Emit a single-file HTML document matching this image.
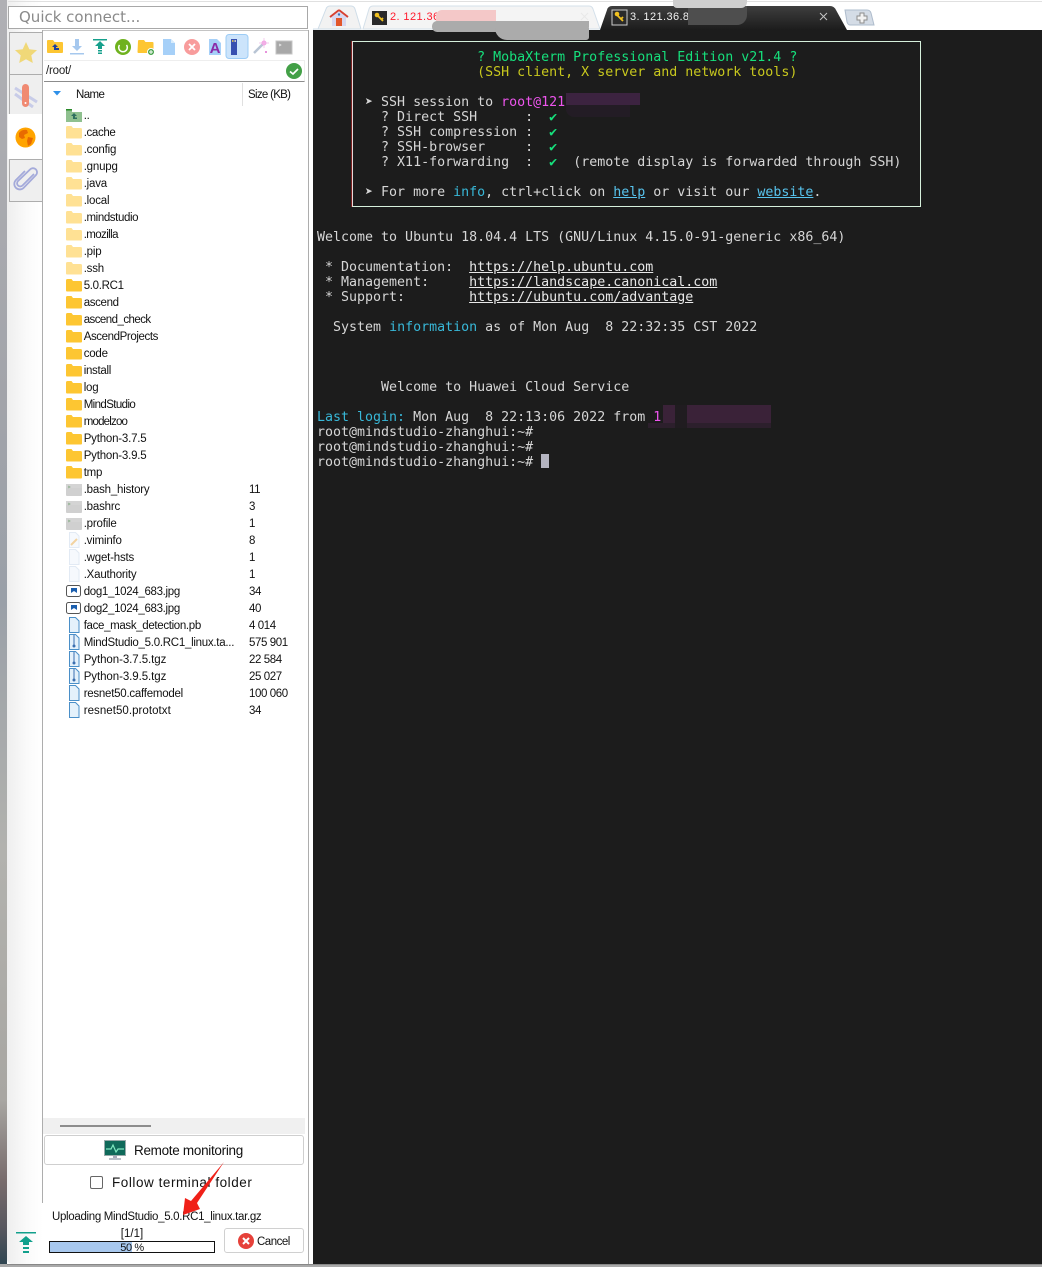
<!DOCTYPE html>
<html><head><meta charset="utf-8"><title>MobaXterm</title>
<style>
html,body{margin:0;padding:0;width:1042px;height:1267px;overflow:hidden;background:#fff}
.a{position:absolute}
#left{position:absolute;left:0;top:0;width:7px;height:1267px;background:linear-gradient(#b0b0b4 0,#a2a4aa 400px,#9aa0a8 600px,#b2b2ae 850px,#a8a6a2 1100px,#786c6c 1180px,#56565e 1230px,#2c4450 1267px)}
#win{position:absolute;left:7px;top:0;width:1035px;height:1264px;background:linear-gradient(90deg,#eeeeee 0,#fafafa 20px,#fff 36px);border-bottom-left-radius:5px}
.stab{position:absolute;left:9px;width:32px;background:#efefef;border:1px solid #adadad;box-sizing:content-box}
.r{position:absolute;left:44px;width:262px;height:16px;margin-top:1px;font:11.5px/16px "Liberation Sans",sans-serif;color:#111;letter-spacing:-.2px;white-space:nowrap}
.r svg{position:absolute;left:22px;top:-1px}
.r b{font-weight:normal;position:absolute;left:39.700px;top:0}
.r i{font-style:normal;position:absolute;left:205px;top:0;letter-spacing:-.4px}
#term{position:absolute;left:313px;top:30px;width:729px;height:1234px;background:#1c1c1c}
pre{position:absolute;left:317px;margin:0;font:13.3px/15px "DejaVu Sans Mono","Liberation Mono",monospace;color:#d6d6d6;white-space:pre}
.g{color:#16e07c}.y{color:#c8c81e}.m{color:#ee55ee}.c{color:#38b8d8}.l{color:#58c4ee;text-decoration:underline}.k{color:#16e07c}
.u{color:#e8e8e8;text-decoration:underline}
</style></head><body>
<svg width="0" height="0" style="position:absolute"><defs>
<symbol id="fp" viewBox="0 0 16 16"><path d="M0 3.500q0-1.500 1.500-1.500h4l1.500 2h7.500q1.500 0 1.500 1.500v8q0 1-1 1h-14q-1 0-1-1z" fill="#ffe194"/></symbol>
<symbol id="fs" viewBox="0 0 16 16"><path d="M0 3.500q0-1.500 1.500-1.500h4l1.500 2h7.500q1.500 0 1.500 1.500v8q0 1-1 1h-14q-1 0-1-1z" fill="#fdc632"/></symbol>
<symbol id="ft" viewBox="0 0 16 16"><path d="M0 6h16v8q0 1-1 1H1q-1 0-1-1z" fill="#d0d0d0"/><rect y="3" width="16" height="4" fill="#d4d4d4"/><path d="M2 5l2 1-2 1" fill="none" stroke="#8fb08f" stroke-width=".8"/></symbol>
<symbol id="fd" viewBox="0 0 16 16"><path d="M3.500.500h6l3.500 3.500v11.500h-9.500z" fill="#f6f9fd" stroke="#e2eaf4"/></symbol>
<symbol id="fb" viewBox="0 0 16 16"><path d="M3.500.500h6l3.500 3.500v11.500h-9.500z" fill="#e4f1fb" stroke="#4a8fc8"/></symbol>
<symbol id="fz" viewBox="0 0 16 16"><path d="M3.500.500h6l3.500 3.500v11.500h-9.500z" fill="#e4f1fb" stroke="#4a8fc8"/><path d="M8 1v10" stroke="#3a6fb0"/><circle cx="8" cy="12" r="1.500" fill="#3a6fb0"/></symbol>
<symbol id="fi" viewBox="0 0 16 16"><rect x=".5" y="2.500" width="14" height="11" rx="2" fill="#fff" stroke="#555"/><path d="M5 5h6v5l-3-2-3 2z" fill="#1c5fae"/></symbol>
<symbol id="fv" viewBox="0 0 16 16"><path d="M3.500.500h6l3.500 3.500v11.500h-9.500z" fill="#f6f9fd" stroke="#e2eaf4"/><path d="M5 13l6-6" stroke="#f2d3a0" stroke-width="2"/></symbol>
</defs></svg>

<div id="left"></div>
<div id="win"></div>
<div class="a" style="left:0;top:1264px;width:1042px;height:3px;background:#a9a9a9"></div>
<div class="a" style="left:7px;top:1264px;width:1035px;height:1px;background:#888"></div>

<!-- top -->
<div class="a" style="left:8px;top:1px;width:1034px;height:1px;background:#e0e0e0"></div>
<div class="a" style="left:8px;top:6px;width:298px;height:21px;background:#fff;border:1px solid #a8a8a8;font:15px/20px 'DejaVu Sans',sans-serif;color:#8a8a8a;text-indent:10px">Quick connect...</div>

<!-- side tabs -->
<div class="stab" style="top:32px;height:41px"></div>
<div class="stab" style="top:74px;height:39px"></div>
<div class="a" style="left:8px;top:114px;width:35px;height:45px;background:#fff"></div>
<div class="stab" style="top:159px;height:41px"></div>
<svg class="a" style="left:13px;top:40px" width="26" height="26" viewBox="0 0 26 26"><path d="M13 2l3.300 7.200 7.700.9-5.700 5.300 1.500 7.600-6.800-3.800-6.800 3.800 1.500-7.600L2 10.100l7.700-.9z" fill="#f0d878"/></svg>
<svg class="a" style="left:13px;top:82px" width="26" height="26" viewBox="0 0 26 26"><path d="M2 6l22 14M2 12l18 13" stroke="#c8cce8" stroke-width="3" fill="none"/><rect x="9" y="2" width="7" height="23" rx="3.500" fill="#f08a72"/><circle cx="12.500" cy="21" r="1" fill="#fff"/></svg>
<svg class="a" style="left:15px;top:127px" width="21" height="21" viewBox="0 0 21 21"><circle cx="10.500" cy="10.500" r="10" fill="#ffa400"/><path d="M4 6q3-4 8-3l1 3-4 2 1 3-3 1-3-2zM13 10l5 1-2 6-3 2-1-5z" fill="#e86a00"/></svg>
<svg class="a" style="left:13px;top:166px" width="26" height="26" viewBox="0 0 26 26"><path d="M21 8L9.500 19.500a3 3 0 0 1-4.500-4.500L17 3.500a4 4 0 0 1 6 5.500L10.500 22a5.500 5.500 0 0 1-8-7.500L12 5" fill="none" stroke="#a4aada" stroke-width="1.800"/></svg>

<!-- panel frame -->
<div class="a" style="left:42px;top:30px;width:266px;height:1px;background:#c4c4c4"></div>
<div class="a" style="left:42px;top:30px;width:1px;height:1173px;background:#adadad"></div>
<div class="a" style="left:308px;top:30px;width:1px;height:1234px;background:#adadad"></div>

<!-- toolbar -->
<svg class="a" style="left:0;top:0" width="310" height="62" viewBox="0 0 310 62">
<path d="M47 41q0-1 1-1h5l1.500 2H62q1 0 1 1v9q0 1-1 1H48q-1 0-1-1z" fill="#fdc632"/><path d="M55 44l-3 3h2v3h5v-2h-3v-1h2z" fill="#1f3f9a"/>
<path d="M75 39h4v7h3l-5 5-5-5h3z" fill="#a6c8ee"/><rect x="70" y="53" width="14" height="1.500" fill="#a6c8ee"/>
<rect x="93" y="39" width="14" height="1.500" fill="#16a08c"/><path d="M100 41l5 5h-3v3h-4v-3h-3z" fill="#16a08c"/><path d="M98 50h4v1.500h-4zM98 52.500h4V54h-4z" fill="#16a08c"/>
<circle cx="123" cy="47" r="8" fill="#6fb21f"/><path d="M119.500 45a4.300 4.300 0 1 0 7 0" fill="none" stroke="#fff" stroke-width="1.500"/>
<path d="M138 41q0-1 1-1h5l1.500 2h7q1 0 1 1v9q0 1-1 1h-14q-1 0-1-1z" fill="#fdc632"/><circle cx="151" cy="52" r="3.500" fill="#43a047" stroke="#fff"/><path d="M149 52h4M151 50v4" stroke="#fff"/>
<path d="M163 39h8l4 4v12h-12z" fill="#a6d0f8"/><path d="M171 39l4 4h-4z" fill="#d8ecfc"/>
<circle cx="192" cy="47" r="8" fill="#f89c9c"/><path d="M189 44l6 6m0-6l-6 6" stroke="#fff" stroke-width="1.800"/>
<path d="M209 39h8l4 4v12h-12z" fill="#a6d0f8"/>
<rect x="226" y="34.500" width="22" height="24" rx="3" fill="#cce4fb" stroke="#9cccf6"/><rect x="231" y="39" width="6" height="16" fill="#3850b0"/><rect x="232" y="40" width="1.500" height="2" fill="#c8b060"/><rect x="234.500" y="40" width="1.500" height="2" fill="#c8c8c8"/>
<path d="M254 53l9-9" stroke="#b8c4d4" stroke-width="2.500"/><circle cx="264" cy="43" r="2.500" fill="#f4a4e4"/><path d="M264 38v10M259 43h10" stroke="#f0b8e8" stroke-width=".7"/><circle cx="266" cy="52" r="1" fill="#e070d0"/>
<rect x="276" y="41" width="16" height="13" fill="#a8a8a8" stroke="#c4c4c4"/><path d="M279 44l2 1-2 1" fill="none" stroke="#eee" stroke-width=".7"/>
</svg>
<div class="a" style="left:207px;top:41px;width:16px;font:bold 15px/15px 'Liberation Sans',sans-serif;color:#8a2aa8;text-align:center">A</div>

<!-- path -->
<div class="a" style="left:44px;top:60px;width:260px;height:20px;background:#fff;border-top:1px solid #eee;border-right:1px solid #eee;border-bottom:1px solid #8c8c8c;font:11.500px/20px 'Liberation Sans',sans-serif;color:#222;text-indent:2px;letter-spacing:-.2px">/root/</div>
<svg class="a" style="left:286px;top:63px" width="16" height="16" viewBox="0 0 16 16"><circle cx="8" cy="8" r="8" fill="#43a047"/><path d="M4 8.500l3 2.500 5-5" fill="none" stroke="#fff" stroke-width="1.700"/></svg>

<!-- header -->
<svg class="a" style="left:53px;top:91px" width="8" height="5"><path d="M0 0h8L4 4.500z" fill="#2f90e8"/></svg>
<div class="a" style="left:76px;top:87px;font:11.500px/16px 'Liberation Sans',sans-serif;color:#111;letter-spacing:-.6px">Name</div>
<div class="a" style="left:242px;top:83px;width:1px;height:23px;background:#e0e0e0"></div>
<div class="a" style="left:248px;top:87px;font:11.500px/16px 'Liberation Sans',sans-serif;color:#111;letter-spacing:-.7px">Size (KB)</div>

<!-- file list -->
<div class="r" style="top:107px"><svg width="16" height="16" viewBox="0 0 16 16"><path d="M0 3h6v2h10v10H0z" fill="#8fc08f"/><path d="M0 2h6v1.500H0z" fill="#2a8a2a"/><path d="M8 6l-3 3h2v3h4v-1.500H9V9h2z" fill="#2f6f5f"/></svg><b>..</b></div>
<div class="r" style="top:124px"><svg width="16" height="16"><use href="#fp"/></svg><b style="letter-spacing:-.35px">.cache</b></div>
<div class="r" style="top:141px"><svg width="16" height="16"><use href="#fp"/></svg><b>.config</b></div>
<div class="r" style="top:158px"><svg width="16" height="16"><use href="#fp"/></svg><b>.gnupg</b></div>
<div class="r" style="top:175px"><svg width="16" height="16"><use href="#fp"/></svg><b>.java</b></div>
<div class="r" style="top:192px"><svg width="16" height="16"><use href="#fp"/></svg><b>.local</b></div>
<div class="r" style="top:209px"><svg width="16" height="16"><use href="#fp"/></svg><b style="letter-spacing:-.4px">.mindstudio</b></div>
<div class="r" style="top:226px"><svg width="16" height="16"><use href="#fp"/></svg><b style="letter-spacing:-.6px">.mozilla</b></div>
<div class="r" style="top:243px"><svg width="16" height="16"><use href="#fp"/></svg><b>.pip</b></div>
<div class="r" style="top:260px"><svg width="16" height="16"><use href="#fp"/></svg><b>.ssh</b></div>
<div class="r" style="top:277px"><svg width="16" height="16"><use href="#fs"/></svg><b style="letter-spacing:-.3px">5.0.RC1</b></div>
<div class="r" style="top:294px"><svg width="16" height="16"><use href="#fs"/></svg><b style="letter-spacing:-.35px">ascend</b></div>
<div class="r" style="top:311px"><svg width="16" height="16"><use href="#fs"/></svg><b style="letter-spacing:-.55px">ascend_check</b></div>
<div class="r" style="top:328px"><svg width="16" height="16"><use href="#fs"/></svg><b style="letter-spacing:-.4px">AscendProjects</b></div>
<div class="r" style="top:345px"><svg width="16" height="16"><use href="#fs"/></svg><b>code</b></div>
<div class="r" style="top:362px"><svg width="16" height="16"><use href="#fs"/></svg><b style="letter-spacing:-.3px">install</b></div>
<div class="r" style="top:379px"><svg width="16" height="16"><use href="#fs"/></svg><b>log</b></div>
<div class="r" style="top:396px"><svg width="16" height="16"><use href="#fs"/></svg><b style="letter-spacing:-.6px">MindStudio</b></div>
<div class="r" style="top:413px"><svg width="16" height="16"><use href="#fs"/></svg><b style="letter-spacing:-.8px">modelzoo</b></div>
<div class="r" style="top:430px"><svg width="16" height="16"><use href="#fs"/></svg><b>Python-3.7.5</b></div>
<div class="r" style="top:447px"><svg width="16" height="16"><use href="#fs"/></svg><b>Python-3.9.5</b></div>
<div class="r" style="top:464px"><svg width="16" height="16"><use href="#fs"/></svg><b>tmp</b></div>
<div class="r" style="top:481px"><svg width="16" height="16"><use href="#ft"/></svg><b>.bash_history</b><i>11</i></div>
<div class="r" style="top:498px"><svg width="16" height="16"><use href="#ft"/></svg><b>.bashrc</b><i>3</i></div>
<div class="r" style="top:515px"><svg width="16" height="16"><use href="#ft"/></svg><b>.profile</b><i>1</i></div>
<div class="r" style="top:532px"><svg width="16" height="16"><use href="#fv"/></svg><b>.viminfo</b><i>8</i></div>
<div class="r" style="top:549px"><svg width="16" height="16"><use href="#fd"/></svg><b>.wget-hsts</b><i>1</i></div>
<div class="r" style="top:566px"><svg width="16" height="16"><use href="#fd"/></svg><b>.Xauthority</b><i>1</i></div>
<div class="r" style="top:583px"><svg width="16" height="16"><use href="#fi"/></svg><b style="letter-spacing:-.32px">dog1_1024_683.jpg</b><i>34</i></div>
<div class="r" style="top:600px"><svg width="16" height="16"><use href="#fi"/></svg><b style="letter-spacing:-.32px">dog2_1024_683.jpg</b><i>40</i></div>
<div class="r" style="top:617px"><svg width="16" height="16"><use href="#fb"/></svg><b style="letter-spacing:-.34px">face_mask_detection.pb</b><i>4 014</i></div>
<div class="r" style="top:634px"><svg width="16" height="16"><use href="#fz"/></svg><b style="letter-spacing:-.27px">MindStudio_5.0.RC1_linux.ta...</b><i>575 901</i></div>
<div class="r" style="top:651px"><svg width="16" height="16"><use href="#fz"/></svg><b style="letter-spacing:-.07px">Python-3.7.5.tgz</b><i>22 584</i></div>
<div class="r" style="top:668px"><svg width="16" height="16"><use href="#fz"/></svg><b style="letter-spacing:-.07px">Python-3.9.5.tgz</b><i>25 027</i></div>
<div class="r" style="top:685px"><svg width="16" height="16"><use href="#fb"/></svg><b style="letter-spacing:-.25px">resnet50.caffemodel</b><i>100 060</i></div>
<div class="r" style="top:702px"><svg width="16" height="16"><use href="#fb"/></svg><b style="letter-spacing:.05px">resnet50.prototxt</b><i>34</i></div>

<!-- bottom of panel -->
<div class="a" style="left:43px;top:1118px;width:262px;height:16px;background:#f0f0f0"></div>
<div class="a" style="left:60px;top:1125px;width:91px;height:2px;background:#8c8c8c"></div>
<div class="a" style="left:44px;top:1135px;width:258px;height:28px;background:#fff;border:1px solid #cfcfcf;border-radius:3px"></div>
<svg class="a" style="left:104px;top:1140px" width="22" height="21" viewBox="0 0 22 21"><rect x="0.500" y="0.500" width="21" height="15" fill="#0f6a5a" stroke="#9aa"/><path d="M2 9h5l2-4 3 7 2-3h6" fill="none" stroke="#7fe8c0" stroke-width="1.200"/><rect x="9" y="16" width="4" height="2" fill="#aab"/><rect x="5" y="18" width="12" height="2" fill="#b8c0c8"/></svg>
<div class="a" style="left:134px;top:1142px;font:13.500px/17px 'Liberation Sans',sans-serif;color:#111;letter-spacing:-.3px">Remote monitoring</div>
<div class="a" style="left:90px;top:1176px;width:11px;height:11px;border:1px solid #666;border-radius:2px;background:#fff"></div>
<div class="a" style="left:112px;top:1174px;font:13.500px/17px 'Liberation Sans',sans-serif;color:#111;letter-spacing:.55px">Follow terminal folder</div>
<div class="a" style="left:52px;top:1210px;font:11.500px/14px 'Liberation Sans',sans-serif;color:#111;letter-spacing:-.32px">Uploading MindStudio_5.0.RC1_linux.tar.gz</div>
<div class="a" style="left:49px;top:1228px;width:166px;text-align:center;font:11.500px/13px 'Liberation Sans',sans-serif;color:#111">[1/1]</div>
<div class="a" style="left:49px;top:1241px;width:164px;height:10px;border:1px solid #111;background:#fff"></div>
<div class="a" style="left:50px;top:1242px;width:82px;height:10px;background:#a8c8ee"></div>
<div class="a" style="left:49px;top:1242px;width:166px;text-align:center;font:11px/12px 'Liberation Sans',sans-serif;color:#111;letter-spacing:-.4px">50 %</div>
<div class="a" style="left:224px;top:1228px;width:78px;height:23px;background:#fff;border:1px solid #d0d0d0;border-radius:3px"></div>
<svg class="a" style="left:238px;top:1233px" width="16" height="16" viewBox="0 0 16 16"><circle cx="8" cy="8" r="8" fill="#e6413a"/><path d="M5 5l6 6m0-6l-6 6" stroke="#fff" stroke-width="2"/></svg>
<div class="a" style="left:257px;top:1235px;font:11.500px/14px 'Liberation Sans',sans-serif;color:#111;letter-spacing:-.5px">Cancel</div>
<svg class="a" style="left:16px;top:1232px" width="20" height="23" viewBox="0 0 20 23"><rect width="20" height="1.500" fill="#12a08c"/><path d="M10 4l7 6h-4v3H7v-3H3z" fill="#12a08c"/><path d="M7 15h6v2H7zM7 19h6v2H7z" fill="#12a08c"/></svg>

<!-- terminal -->
<div id="term"></div>

<!-- tabs -->
<svg class="a" style="left:313px;top:0" width="729" height="30" viewBox="0 0 729 30">
<defs><linearGradient id="dk" x1="0" y1="0" x2="0" y2="1"><stop offset="0" stop-color="#3e3e3e"/><stop offset="1" stop-color="#1c1c1c"/></linearGradient></defs>
<path d="M0 30V29H5L13 9q1-3 4-3h21q3 0 4 3l6 20H0z" fill="#f2f2f2" stroke="#cfdde8"/>
<path d="M50 29L56 9q1-3 4-3h216q3 0 4 3l7 20z" fill="#f4f4f4" stroke="#d4e0ea"/>
<path d="M287 30L294 10q1-4 5-4h218q4 0 6 4l11 20z" fill="url(#dk)"/>
<path d="M532 10h22q3 0 4 3l3 12H537q-2 0-3-3z" fill="#d4dce6" stroke="#aebccc"/>
<path d="M547 13h4v3h3v4h-3v3h-4v-3h-3v-4h3z" fill="#f2f2f2" stroke="#8c8c8c"/>
<path d="M507 13l7 7m0-7l-7 7" stroke="#c4c4c4"/>
<path d="M268 13l7 7m0-7l-7 7" stroke="#e8e8e8"/>
<path d="M26 11l-9 7h2v8h14v-8h2z" fill="#d8d8f0"/><path d="M26 10l-9 7M26 10l9 7" stroke="#d84030" stroke-width="1.800" fill="none"/><rect x="23" y="18" width="6" height="8" fill="#e2562a"/><circle cx="26" cy="14.500" r="1.200" fill="#3a78c0"/>
<rect x="59" y="11" width="15" height="14" fill="#2a2a2a"/><path d="M63 14l2 2 5 5M68 20l2-2" stroke="#f0c020" stroke-width="1.800" fill="none"/><circle cx="64" cy="15" r="2.300" fill="#f0c020"/>
<rect x="299" y="10" width="15" height="15" fill="#2a2a2a" stroke="#ccc"/><path d="M303 14l7 7M308 19l2-2" stroke="#f0c020" stroke-width="1.800" fill="none"/><circle cx="304" cy="14" r="2.300" fill="#f0c020"/>
</svg>
<div class="a" style="left:390px;top:10px;font:11px/15px 'Liberation Sans',sans-serif;color:#ff1a2c;letter-spacing:.4px">2. 121.36</div>
<div class="a" style="left:630px;top:10px;font:11px/15px 'Liberation Sans',sans-serif;color:#f0f0f0;letter-spacing:.4px">3. 121.36.8</div>
<!-- redactions -->
<div class="a" style="left:436px;top:10px;width:60px;height:12px;background:#f4c8c8;border-radius:6px 0 0 0"></div>
<div class="a" style="left:432px;top:21px;width:157px;height:11px;background:#ababab;border-radius:5px 0 5px 5px"></div>
<div class="a" style="left:495px;top:28px;width:94px;height:12px;background:#ababab;border-radius:0 0 7px 30px"></div>
<div class="a" style="left:688px;top:6px;width:59px;height:19px;background:#4e4e4e;border-radius:0 0 10px 0"></div>
<div class="a" style="left:673px;top:0;width:74px;height:8px;background:#cfcfcf;border-radius:0 0 6px 4px"></div>

<!-- banner -->
<div class="a" style="left:352px;top:41px;width:567px;height:164px;border:1px solid #d6f0dc;border-left-color:#e8d8d8"></div>
<div class="a" style="left:351px;top:41px;width:1px;height:166px;background:#7a2020"></div>

<pre style="top:50px"><span class="g">                    ? MobaXterm Professional Edition v21.4 ?</span>
<span class="y">                    (SSH client, X server and network tools)</span>

      ➤ SSH session to <span class="m">root@121</span>
        ? Direct SSH      :  <span class="k">✔</span>
        ? SSH compression :  <span class="k">✔</span>
        ? SSH-browser     :  <span class="k">✔</span>
        ? X11-forwarding  :  <span class="k">✔</span>  (remote display is forwarded through SSH)

      ➤ For more <span class="c">info</span>, ctrl+click on <span class="l">help</span> or visit our <span class="l">website</span>.


Welcome to Ubuntu 18.04.4 LTS (GNU/Linux 4.15.0-91-generic x86_64)

 * Documentation:  <span class="u">https://help.ubuntu.com</span>
 * Management:     <span class="u">https://landscape.canonical.com</span>
 * Support:        <span class="u">https://ubuntu.com/advantage</span>

  System <span class="c">information</span> as of Mon Aug  8 22:32:35 CST 2022



        Welcome to Huawei Cloud Service

<span class="c">Last login:</span> Mon Aug  8 22:13:06 2022 from <span class="m">1</span>
root@mindstudio-zhanghui:~#
root@mindstudio-zhanghui:~#
root@mindstudio-zhanghui:~# </pre>
<div class="a" style="left:541px;top:454px;width:8px;height:14px;background:#b4b4c0"></div>

<div class="a" style="left:566px;top:93px;width:74px;height:12px;background:#3c2340"></div>
<div class="a" style="left:566px;top:105px;width:64px;height:12px;background:#231c25;border-radius:0 0 0 8px"></div>
<div class="a" style="left:663px;top:405px;width:108px;height:18px;background:#3a2238"></div>
<div class="a" style="left:648px;top:423px;width:123px;height:5px;background:#2c1f2c"></div>
<div class="a" style="left:675px;top:405px;width:12px;height:23px;background:#201c20"></div>

<!-- arrow -->
<svg class="a" style="left:0;top:0;pointer-events:none" width="320" height="1267" viewBox="0 0 320 1267"><path d="M224 1162L197 1203 200 1209 183 1215 185 1198 191 1201z" fill="#f02018"/></svg>
</body></html>
